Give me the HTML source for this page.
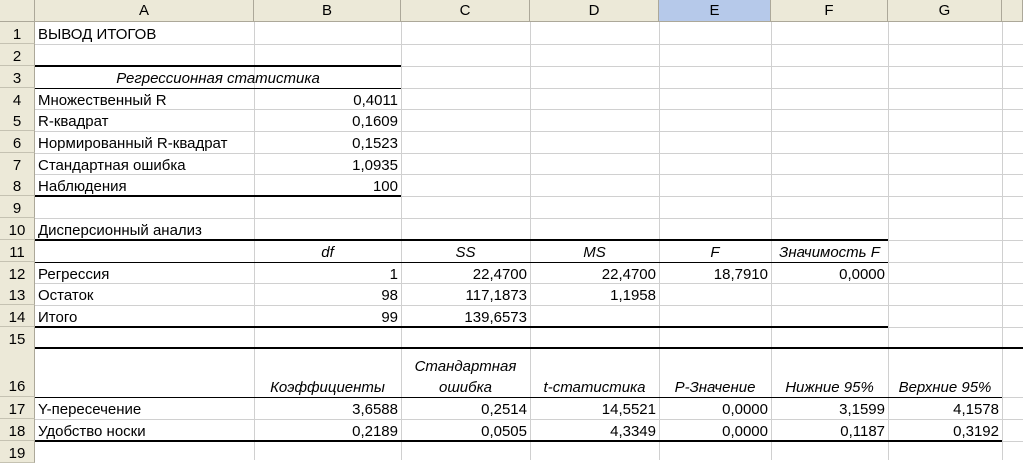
<!DOCTYPE html>
<html><head><meta charset="utf-8"><style>
body{margin:0;width:1023px;height:460px;overflow:hidden;background:#fff;font-family:"Liberation Sans",Arial,sans-serif;font-size:15px;color:#000;position:relative}
div{position:absolute;box-sizing:border-box;white-space:nowrap}
.h{background:#ece9d8;text-align:center;border-right:1px solid #aca899;border-bottom:1px solid #aca899;line-height:22px;top:0;height:22px}
.r{background:#ece9d8;text-align:center;left:0;width:35px;border-right:1px solid #aca899;border-bottom:1px solid #c5c2b2}
.v{top:22px;height:438px;width:1px;background:#d0d0d0}
.g{left:35px;width:988px;height:1px;background:#d0d0d0}
.t{line-height:22px;height:22px;padding-top:2px}
.R{text-align:right}
.i{font-style:italic}
.k{background:#000}
</style></head><body>
<div class="h" style="left:0;width:35px"></div>
<div class="h" style="left:35px;width:219px">A</div>
<div class="h" style="left:254px;width:147px">B</div>
<div class="h" style="left:401px;width:129px">C</div>
<div class="h" style="left:530px;width:129px">D</div>
<div class="h" style="left:659px;width:112px;background:#b6c9ea">E</div>
<div class="h" style="left:771px;width:117px">F</div>
<div class="h" style="left:888px;width:114px">G</div>
<div class="h" style="left:1002px;width:21px"></div>

<div class="v" style="left:254px"></div><div class="v" style="left:401px"></div><div class="v" style="left:530px"></div><div class="v" style="left:659px"></div><div class="v" style="left:771px"></div><div class="v" style="left:888px"></div><div class="v" style="left:1002px"></div>

<div class="g" style="top:44px"></div><div class="g" style="top:66px"></div><div class="g" style="top:88px"></div><div class="g" style="top:109px"></div><div class="g" style="top:131px"></div><div class="g" style="top:153px"></div><div class="g" style="top:174px"></div><div class="g" style="top:196px"></div><div class="g" style="top:218px"></div><div class="g" style="top:240px"></div><div class="g" style="top:262px"></div><div class="g" style="top:283px"></div><div class="g" style="top:305px"></div><div class="g" style="top:327px"></div><div class="g" style="top:348px"></div><div class="g" style="top:397px"></div><div class="g" style="top:419px"></div><div class="g" style="top:441px"></div>

<div class="r t" style="top:22px">1</div><div class="r t" style="top:44px">2</div><div class="r t" style="top:66px">3</div><div class="r t" style="top:88px">4</div><div class="r t" style="top:109px">5</div><div class="r t" style="top:131px">6</div><div class="r t" style="top:153px">7</div><div class="r t" style="top:174px">8</div><div class="r t" style="top:196px">9</div><div class="r t" style="top:218px">10</div><div class="r t" style="top:240px">11</div><div class="r t" style="top:262px">12</div><div class="r t" style="top:283px">13</div><div class="r t" style="top:305px">14</div><div class="r t" style="top:327px">15</div>
<div class="r" style="top:348px;height:49px;line-height:22px;padding-top:28px">16</div>
<div class="r t" style="top:397px">17</div><div class="r t" style="top:419px">18</div><div class="r t" style="top:441px">19</div>

<div class="k" style="left:35px;top:65px;width:366px;height:2px"></div>
<div class="k" style="left:35px;top:88px;width:366px;height:1px"></div>
<div class="k" style="left:35px;top:195px;width:366px;height:2px"></div>
<div class="k" style="left:35px;top:239px;width:853px;height:2px"></div>
<div class="k" style="left:35px;top:262px;width:853px;height:1px"></div>
<div class="k" style="left:35px;top:326px;width:853px;height:2px"></div>
<div class="k" style="left:35px;top:347px;width:988px;height:2px"></div>
<div class="k" style="left:35px;top:397px;width:967px;height:1px"></div>
<div class="k" style="left:35px;top:440px;width:967px;height:2px"></div>

<div class="t" style="left:38px;top:22px">ВЫВОД ИТОГОВ</div>
<div class="t i" style="left:35px;top:66px;width:366px;text-align:center">Регрессионная статистика</div>
<div class="t" style="left:38px;top:88px">Множественный R</div><div class="t R" style="left:254px;width:144px;top:88px">0,4011</div>
<div class="t" style="left:38px;top:109px">R-квадрат</div><div class="t R" style="left:254px;width:144px;top:109px">0,1609</div>
<div class="t" style="left:38px;top:131px">Нормированный R-квадрат</div><div class="t R" style="left:254px;width:144px;top:131px">0,1523</div>
<div class="t" style="left:38px;top:153px">Стандартная ошибка</div><div class="t R" style="left:254px;width:144px;top:153px">1,0935</div>
<div class="t" style="left:38px;top:174px">Наблюдения</div><div class="t R" style="left:254px;width:144px;top:174px">100</div>
<div class="t" style="left:38px;top:218px">Дисперсионный анализ</div>

<div class="t i" style="left:254px;width:147px;top:240px;text-align:center">df</div>
<div class="t i" style="left:401px;width:129px;top:240px;text-align:center">SS</div>
<div class="t i" style="left:530px;width:129px;top:240px;text-align:center">MS</div>
<div class="t i" style="left:659px;width:112px;top:240px;text-align:center">F</div>
<div class="t i" style="left:771px;width:117px;top:240px;text-align:center">Значимость F</div>

<div class="t" style="left:38px;top:262px">Регрессия</div>
<div class="t R" style="left:254px;width:144px;top:262px">1</div><div class="t R" style="left:401px;width:126px;top:262px">22,4700</div><div class="t R" style="left:530px;width:126px;top:262px">22,4700</div><div class="t R" style="left:659px;width:109px;top:262px">18,7910</div><div class="t R" style="left:771px;width:114px;top:262px">0,0000</div>
<div class="t" style="left:38px;top:283px">Остаток</div>
<div class="t R" style="left:254px;width:144px;top:283px">98</div><div class="t R" style="left:401px;width:126px;top:283px">117,1873</div><div class="t R" style="left:530px;width:126px;top:283px">1,1958</div>
<div class="t" style="left:38px;top:305px">Итого</div>
<div class="t R" style="left:254px;width:144px;top:305px">99</div><div class="t R" style="left:401px;width:126px;top:305px">139,6573</div>

<div class="t i" style="left:254px;width:147px;top:375px;text-align:center">Коэффициенты</div>
<div class="t i" style="left:401px;width:129px;top:354px;text-align:center">Стандартная</div>
<div class="t i" style="left:401px;width:129px;top:375px;text-align:center">ошибка</div>
<div class="t i" style="left:530px;width:129px;top:375px;text-align:center">t-статистика</div>
<div class="t i" style="left:659px;width:112px;top:375px;text-align:center">P-Значение</div>
<div class="t i" style="left:771px;width:117px;top:375px;text-align:center">Нижние 95%</div>
<div class="t i" style="left:888px;width:114px;top:375px;text-align:center">Верхние 95%</div>

<div class="t" style="left:38px;top:397px">Y-пересечение</div>
<div class="t R" style="left:254px;width:144px;top:397px">3,6588</div><div class="t R" style="left:401px;width:126px;top:397px">0,2514</div><div class="t R" style="left:530px;width:126px;top:397px">14,5521</div><div class="t R" style="left:659px;width:109px;top:397px">0,0000</div><div class="t R" style="left:771px;width:114px;top:397px">3,1599</div><div class="t R" style="left:888px;width:111px;top:397px">4,1578</div>
<div class="t" style="left:38px;top:419px">Удобство носки</div>
<div class="t R" style="left:254px;width:144px;top:419px">0,2189</div><div class="t R" style="left:401px;width:126px;top:419px">0,0505</div><div class="t R" style="left:530px;width:126px;top:419px">4,3349</div><div class="t R" style="left:659px;width:109px;top:419px">0,0000</div><div class="t R" style="left:771px;width:114px;top:419px">0,1187</div><div class="t R" style="left:888px;width:111px;top:419px">0,3192</div>
</body></html>
